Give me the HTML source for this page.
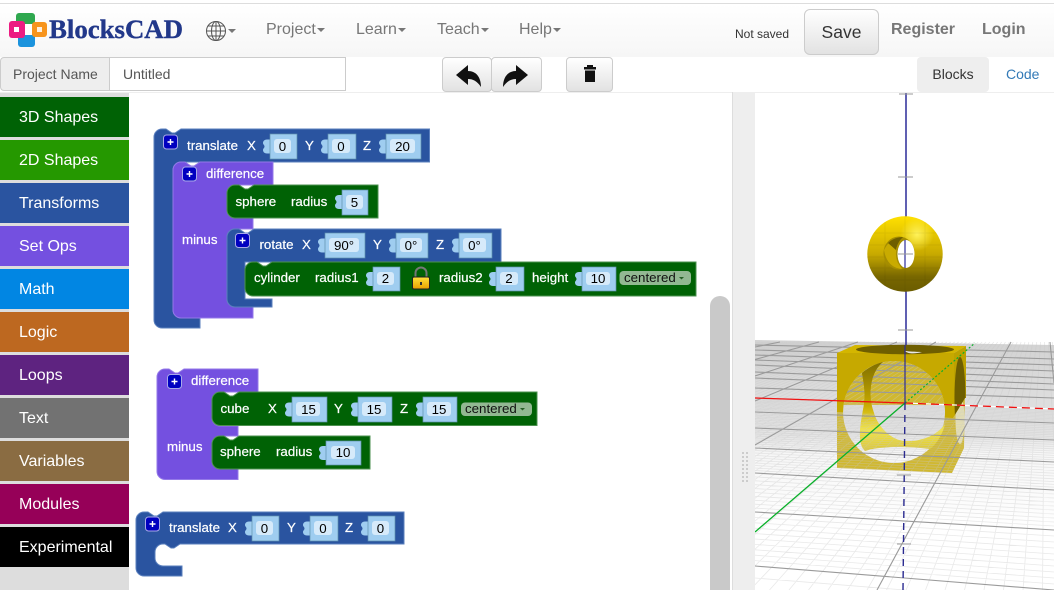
<!DOCTYPE html>
<html><head><meta charset="utf-8"><title>BlocksCAD</title>
<style>
html,body{margin:0;padding:0;background:#fff;width:1054px;height:590px;overflow:hidden}
#p{position:relative;width:1054px;height:590px;overflow:hidden;font-family:"Liberation Sans",sans-serif;background:#fff}
#p>div{position:absolute}
.nav{left:0;top:3px;width:1054px;height:53px;border-top:1px solid #ddd;border-bottom:1px solid #d4d4d4;background:linear-gradient(#fff,#f6f6f6)}
.t{position:absolute;white-space:nowrap}
.m{color:#777;font-size:16px;top:21px}
.c{display:inline-block;width:0;height:0;border-left:4px solid transparent;border-right:4px solid transparent;border-top:4px solid #777;vertical-align:middle;margin-left:1px}
.btn{background:linear-gradient(#fff,#e2e2e2);border:1px solid #ccc;border-radius:4px;box-sizing:border-box}
.sb{left:0;width:129px;height:40px;color:#fff;font-size:16px;line-height:42px;text-indent:19px}
svg{display:block}
svg text{font-family:"Liberation Sans",sans-serif}
.w{fill:#fff;font-size:13.3px;stroke:#fff;stroke-width:.2}
.f{fill:#9fcdf0;stroke:#5f90ad;stroke-width:.7}
.i{fill:#d6eafa}
.v{fill:#000;font-size:13.3px;text-anchor:middle}
.tb{fill:#9fcdf0}
.dd{fill:#92b892}
.dt{fill:#111;font-size:13.3px}
.pb{fill:#0000c0;stroke:#a8a8e8;stroke-width:1}
.pt{stroke:#fff;stroke-width:1.4}
</style></head><body><div id="p">

<div class="nav"></div>
<svg style="position:absolute;left:0;top:0" width="240" height="56">
<rect x="16" y="13" width="19" height="11" rx="3" fill="#2fa84f"/>
<rect x="21" y="20" width="9" height="16" fill="#2fa84f"/>
<rect x="18" y="33" width="17" height="14" rx="3" fill="#1b93dd"/>
<rect x="9" y="21" width="16" height="17" rx="3" fill="#ec1c82"/>
<rect x="32" y="22" width="15" height="15" rx="3" fill="#f7941d"/>
<rect x="25" y="24" width="7" height="11" fill="#fff"/>
<rect x="14" y="27" width="5" height="5" fill="#fff"/>
<rect x="37" y="27" width="5" height="5" fill="#fff" opacity=".85"/>
<text x="49" y="38" style="font-family:'Liberation Serif',serif;font-weight:bold;font-size:26.8px;stroke:#22388a;stroke-width:.4" fill="#22388a">BlocksCAD</text>
<g fill="none" stroke="#555" stroke-width="1">
<circle cx="216" cy="31" r="9.500"/><ellipse cx="216" cy="31" rx="4.500" ry="9.500"/>
<path d="M216,21.500V40.500M206.500,31H225.500M208,26H224M208,36H224"/></g>
<path d="M228,29h8l-4,4z" fill="#777"/>
</svg>
<div class="t m" style="left:266px">Project<span class="c"></span></div>
<div class="t m" style="left:356px">Learn<span class="c"></span></div>
<div class="t m" style="left:437px">Teach<span class="c"></span></div>
<div class="t m" style="left:519px">Help<span class="c"></span></div>
<div class="t" style="left:735px;top:27px;font-size:12px;color:#333">Not saved</div>
<div class="btn" style="left:804px;top:9px;width:75px;height:46px;border-radius:6px;text-align:center;font-size:17.5px;line-height:44px;color:#333">Save</div>
<div class="t" style="left:891px;top:21px;font-size:16px;font-weight:bold;color:#777">Register</div>
<div class="t" style="left:982px;top:21px;font-size:16px;font-weight:bold;color:#777">Login</div>

<div style="left:0;top:57px;width:1054px;height:36px;background:#fff;border-bottom:1px solid #eee;box-sizing:border-box"></div>
<div style="left:0;top:57px;width:110px;height:34px;background:#eee;border:1px solid #ccc;border-radius:4px 0 0 4px;box-sizing:border-box;color:#555;font-size:14px;line-height:32px;text-indent:12px">Project Name</div>
<div style="left:110px;top:57px;width:236px;height:34px;background:#fff;border:1px solid #ccc;border-left:none;box-sizing:border-box;color:#555;font-size:14px;line-height:32px;text-indent:13px">Untitled</div>
<div class="btn" style="left:442px;top:57px;width:50px;height:35px"></div>
<div class="btn" style="left:491px;top:57px;width:51px;height:35px"></div>
<div class="btn" style="left:566px;top:57px;width:47px;height:35px"></div>
<svg style="position:absolute;left:440px;top:57px" width="180" height="36">
<path d="M16,18 L28,8 V14 C36,14 41,20 41,30 C37,24 33,22 28,22 V28 Z" fill="#111"/>
<path d="M88,18 L76,8 V14 C68,14 63,20 63,30 C67,24 71,22 76,22 V28 Z" fill="#111"/>
<path d="M144,10h3v-2h6v2h3v2.500h-12z M145,13.500h10V25h-10z" fill="#111"/>
</svg>
<div style="left:917px;top:57px;width:72px;height:35px;background:#eee;border-radius:4px;text-align:center;font-size:14px;line-height:34px;color:#333">Blocks</div>
<div class="t" style="left:1006px;top:66px;font-size:14px;color:#337ab7">Code</div>

<div style="left:0;top:93px;width:129px;height:497px;background:#ddd"></div>
<div class="sb" style="top:97px;background:#006205">3D Shapes</div>
<div class="sb" style="top:140px;background:#259800">2D Shapes</div>
<div class="sb" style="top:183px;background:#2a54a0">Transforms</div>
<div class="sb" style="top:226px;background:#7450e0">Set Ops</div>
<div class="sb" style="top:269px;background:#0186e3">Math</div>
<div class="sb" style="top:312px;background:#bd6820">Logic</div>
<div class="sb" style="top:355px;background:#5e2380">Loops</div>
<div class="sb" style="top:398px;background:#727272">Text</div>
<div class="sb" style="top:441px;background:#8a6c42">Variables</div>
<div class="sb" style="top:484px;background:#960058">Modules</div>
<div class="sb" style="top:527px;background:#000">Experimental</div>

<div style="left:710px;top:296px;width:20px;height:294px;background:#c9c9c9;border-radius:10px 10px 0 0"></div>
<div style="left:732px;top:92px;width:23px;height:498px;background:#eee;border-left:1px solid #ddd;box-sizing:border-box"></div>
<svg style="position:absolute;left:740px;top:450px" width="10" height="36" fill="#ccc">
<path d="M2,2h2v2h-2zM6,2h2v2h-2zM2,6h2v2h-2zM6,6h2v2h-2zM2,10h2v2h-2zM6,10h2v2h-2zM2,14h2v2h-2zM6,14h2v2h-2zM2,18h2v2h-2zM6,18h2v2h-2zM2,22h2v2h-2zM6,22h2v2h-2zM2,26h2v2h-2zM6,26h2v2h-2zM2,30h2v2h-2zM6,30h2v2h-2z"/></svg>

<svg style="position:absolute;left:0;top:0" width="732" height="590">
<defs><path id="t" d="M7,-7H4C1,-7 0,-5 0,-3.500C0,-2 1.500,-1.500 1.500,0C1.500,1.500 0,2 0,3.500C0,5 1,7 4,7H7Z" class="tb"/></defs>

<path fill="#2a54a0" stroke="#5a7fbd" stroke-width="1" d="M154,137a8,8 0 0 1 8,-8h4l6,4h3l6,-4H429.500V162H181a8,8 0 0 0 -8,8V310a8,8 0 0 0 8,8H200V328H162a8,8 0 0 1 -8,-8Z"/>
<path fill="#7450e0" stroke="#9479e8" stroke-width="1" d="M173,170a8,8 0 0 1 8,-8h4l6,4h3l6,-4H273V185H235a8,8 0 0 0 -8,8V210a8,8 0 0 0 8,8H253V229H235a8,8 0 0 0 -8,8V299a8,8 0 0 0 8,8H253V318H181a8,8 0 0 1 -8,-8Z"/>
<path fill="#006205" stroke="#4d9150" stroke-width="1" d="M227,193a8,8 0 0 1 8,-8h4l6,4h3l6,-4H378V218H235a8,8 0 0 1 -8,-8Z"/>
<path fill="#2a54a0" stroke="#5a7fbd" stroke-width="1" d="M227,237a8,8 0 0 1 8,-8h4l6,4h3l6,-4H501V262H245V299H272V307H235a8,8 0 0 1 -8,-8Z"/>
<path fill="#006205" stroke="#4d9150" stroke-width="1" d="M245,270a8,8 0 0 1 8,-8h4l6,4h3l6,-4H696V296H253a8,8 0 0 1 -8,-8Z"/>

<path fill="#7450e0" stroke="#9479e8" stroke-width="1" d="M157,377a8,8 0 0 1 8,-8h4l6,4h3l6,-4H258V392H220a8,8 0 0 0 -8,8V418a8,8 0 0 0 8,8H238V436H220a8,8 0 0 0 -8,8V461a8,8 0 0 0 8,8H238V479.500H165a8,8 0 0 1 -8,-8Z"/>
<path fill="#006205" stroke="#4d9150" stroke-width="1" d="M212,400a8,8 0 0 1 8,-8h4l6,4h3l6,-4H537V425.500H220a8,8 0 0 1 -8,-8Z"/>
<path fill="#006205" stroke="#4d9150" stroke-width="1" d="M212,444a8,8 0 0 1 8,-8h4l6,4h3l6,-4H370V469H220a8,8 0 0 1 -8,-8Z"/>

<path fill="#2a54a0" stroke="#5a7fbd" stroke-width="1" d="M136,520a8,8 0 0 1 8,-8h4l6,4h3l6,-4H404V544H180l-6,4h-3l-6,-4h-2a8,8 0 0 0 -8,8V558a8,8 0 0 0 8,8H182V576H144a8,8 0 0 1 -8,-8Z"/>

<g><rect class="pb" x="163.500" y="135" width="14" height="14" rx="3"/><path class="pt" d="M167.500,142h6M170.500,139v6"/>
<rect class="pb" x="182.500" y="167" width="14" height="14" rx="3"/><path class="pt" d="M186.500,174h6M189.500,171v6"/>
<rect class="pb" x="235.500" y="233.500" width="14" height="14" rx="3"/><path class="pt" d="M239.500,240.500h6M242.500,237.500v6"/>
<rect class="pb" x="167.500" y="374.500" width="14" height="14" rx="3"/><path class="pt" d="M171.500,381.500h6M174.500,378.500v6"/>
<rect class="pb" x="145.500" y="517" width="14" height="14" rx="3"/><path class="pt" d="M149.500,524h6M152.500,521v6"/></g>

<text class="w" x="187" y="150">translate</text><text class="w" x="247" y="150">X</text><text class="w" x="305" y="150">Y</text><text class="w" x="363" y="150">Z</text>
<use href="#t" x="263" y="146.500"/><rect class="f" x="270" y="134" width="27" height="25"/><rect class="i" x="274" y="139" width="17" height="14" rx="3"/><text class="v" x="282.500" y="151">0</text>
<use href="#t" x="321" y="146.500"/><rect class="f" x="328" y="134" width="28" height="25"/><rect class="i" x="332" y="139" width="18" height="14" rx="3"/><text class="v" x="341" y="151">0</text>
<use href="#t" x="379" y="146.500"/><rect class="f" x="386" y="134" width="35" height="25"/><rect class="i" x="390" y="139" width="25" height="14" rx="3"/><text class="v" x="402.500" y="151">20</text>

<text class="w" x="206" y="178">difference</text>
<text class="w" x="182" y="244">minus</text>
<text class="w" x="235.500" y="206">sphere</text><text class="w" x="291" y="206">radius</text>
<use href="#t" x="335" y="202"/><rect class="f" x="342" y="190" width="26" height="25"/><rect class="i" x="346" y="195" width="17" height="14" rx="3"/><text class="v" x="354.500" y="207">5</text>

<text class="w" x="259.500" y="249">rotate</text><text class="w" x="302" y="249">X</text><text class="w" x="373" y="249">Y</text><text class="w" x="436" y="249">Z</text>
<use href="#t" x="318" y="245.500"/><rect class="f" x="325" y="233" width="40" height="25"/><rect class="i" x="329" y="238" width="30" height="14" rx="3"/><text class="v" x="344" y="250">90°</text>
<use href="#t" x="389" y="245.500"/><rect class="f" x="396" y="233" width="32" height="25"/><rect class="i" x="400" y="238" width="22" height="14" rx="3"/><text class="v" x="411" y="250">0°</text>
<use href="#t" x="452" y="245.500"/><rect class="f" x="459" y="233" width="33" height="25"/><rect class="i" x="463" y="238" width="23" height="14" rx="3"/><text class="v" x="474.500" y="250">0°</text>

<text class="w" x="254" y="282">cylinder</text><text class="w" x="315" y="282">radius1</text><text class="w" x="439" y="282">radius2</text><text class="w" x="532" y="282">height</text>
<use href="#t" x="366" y="279"/><rect class="f" x="373" y="267" width="27" height="24"/><rect class="i" x="377" y="272" width="17" height="13" rx="3"/><text class="v" x="385.500" y="283">2</text>
<use href="#t" x="489" y="279"/><rect class="f" x="496" y="267" width="28" height="24"/><rect class="i" x="500" y="272" width="18" height="13" rx="3"/><text class="v" x="509" y="283">2</text>
<use href="#t" x="575" y="279"/><rect class="f" x="582" y="267" width="34" height="24"/><rect class="i" x="586" y="272" width="24" height="13" rx="3"/><text class="v" x="598" y="283">10</text>
<rect class="dd" x="619.500" y="271" width="71.500" height="14" rx="4"/><text class="dt" x="624" y="282">centered</text><path d="M679,277h5l-2.500,2.500z" fill="#265f26"/>
<defs><linearGradient id="lk" x1="0" y1="0" x2="0" y2="1"><stop offset="0" stop-color="#ffe23a"/><stop offset="1" stop-color="#e8a000"/></linearGradient></defs>
<path d="M415.500,278V273a5.500,5.500 0 0 1 11,0V278" fill="none" stroke="#777" stroke-width="2"/>
<rect x="412.500" y="277" width="17" height="12" rx="1.500" fill="url(#lk)" stroke="#222" stroke-width="1"/><rect x="420" y="282" width="2" height="3" fill="#333"/>

<text class="w" x="191" y="385">difference</text><text class="w" x="167" y="451">minus</text>
<text class="w" x="220.500" y="413">cube</text><text class="w" x="268" y="413">X</text><text class="w" x="334" y="413">Y</text><text class="w" x="400" y="413">Z</text>
<use href="#t" x="285" y="409.500"/><rect class="f" x="292" y="397" width="35" height="25"/><rect class="i" x="296" y="402" width="24" height="14" rx="3"/><text class="v" x="308.500" y="414">15</text>
<use href="#t" x="351" y="409.500"/><rect class="f" x="358" y="397" width="34" height="25"/><rect class="i" x="362" y="402" width="24" height="14" rx="3"/><text class="v" x="374" y="414">15</text>
<use href="#t" x="416" y="409.500"/><rect class="f" x="423" y="397" width="34" height="25"/><rect class="i" x="427" y="402" width="24" height="14" rx="3"/><text class="v" x="439" y="414">15</text>
<rect class="dd" x="461" y="402.500" width="71" height="13.500" rx="4"/><text class="dt" x="465" y="413">centered</text><path d="M520,408h5l-2.500,2.500z" fill="#265f26"/>
<text class="w" x="220" y="456">sphere</text><text class="w" x="276" y="456">radius</text>
<use href="#t" x="319" y="453"/><rect class="f" x="326" y="441" width="35" height="24"/><rect class="i" x="331" y="446" width="24" height="13" rx="3"/><text class="v" x="343" y="457">10</text>

<text class="w" x="169" y="532">translate</text><text class="w" x="228" y="532">X</text><text class="w" x="287" y="532">Y</text><text class="w" x="345" y="532">Z</text>
<use href="#t" x="245" y="528.500"/><rect class="f" x="252" y="516" width="27" height="25"/><rect class="i" x="256" y="521" width="17" height="14" rx="3"/><text class="v" x="264.500" y="533">0</text>
<use href="#t" x="303" y="528.500"/><rect class="f" x="310" y="516" width="28" height="25"/><rect class="i" x="314" y="521" width="18" height="14" rx="3"/><text class="v" x="323" y="533">0</text>
<use href="#t" x="361" y="528.500"/><rect class="f" x="368" y="516" width="27" height="25"/><rect class="i" x="372" y="521" width="17" height="14" rx="3"/><text class="v" x="380.500" y="533">0</text>
</svg>

<svg style="position:absolute;left:755px;top:93px" width="299" height="497" viewBox="755 93 299 497">
<defs>
<linearGradient id="fl" x1="0" y1="340" x2="0" y2="530" gradientUnits="userSpaceOnUse"><stop offset="0" stop-color="#d2d2d2"/><stop offset=".5" stop-color="#e4e4e4"/><stop offset=".6" stop-color="#f6f6f6"/><stop offset="1" stop-color="#fff"/></linearGradient>
<linearGradient id="sp" x1="0" y1="0" x2="0" y2="1"><stop offset="0" stop-color="#ffe000"/><stop offset=".5" stop-color="#c8aa00"/><stop offset=".8" stop-color="#786700"/><stop offset="1" stop-color="#6b5c00"/></linearGradient>
<radialGradient id="hl" cx=".66" cy=".24" r=".22"><stop offset="0" stop-color="#fff25a"/><stop offset="1" stop-color="#fff25a" stop-opacity="0"/></radialGradient>
<linearGradient id="inn" x1="0" y1="362" x2="0" y2="452" gradientUnits="userSpaceOnUse"><stop offset="0" stop-color="#7f6e00"/><stop offset=".45" stop-color="#c2a500"/><stop offset=".75" stop-color="#f6e63a"/><stop offset="1" stop-color="#d9c53a"/></linearGradient>
<clipPath id="up"><path d="M830,300H975V398L965,398L953,418L837,412H830Z"/></clipPath>
</defs>

<path d="M755,340L1054,345V590H755Z" fill="url(#fl)"/>

<path d="M837,405L954,405L965,390L964,448L952,473L837,468Z M894,361a51,51 0 1 0 .1,0Z" fill="#d0b830" fill-rule="evenodd"/>
<ellipse cx="960" cy="420" rx="4.500" ry="24" fill="#e6e0b0"/>
<path d="M862,373C868,368 875,364 883,362C870,372 868,395 873,410C877,425 888,438 903,441C917,442 935,438 945,424C943,434 935,446 930,449C905,446 880,446 865,451C857,444 860,425 863,410C866,395 864,385 862,373Z" fill="url(#inn)"/>

<g id="gm" fill="none" stroke="#c8c8c8" stroke-opacity=".4" stroke-width=".8"></g>
<path fill="none" stroke="#9a9a9a" stroke-width="1.100" d="M755,566L1054,590M755,512L1054,530M755,473L1054,490M755,448L1054,462M755,428L1054,440M755,412L1054,423M755,388L1054,398M755,378L1054,390M755,372L1054,384M755,365L1054,378M755,360L1054,371M755,355L1054,365M755,350L1054,359M755,345L1054,352
M877,590L1011,342M1050,342L1054,383M936,342L755,445M897,342L755,401M858,342L755,376M819,342L755,359.500M780,342L755,347"/>

<g clip-path="url(#up)">
<path d="M837,353L954,353L954,440L837,440Z M894,361a51,51 0 1 0 .1,0Z" fill="#c6a900" fill-rule="evenodd"/>
<path d="M954,353L966,346V420L954,440Z" fill="#bda200"/>
<ellipse cx="960" cy="398" rx="5.500" ry="41" fill="#6e5e00"/>
<path d="M862,373C868,368 875,364 883,362C870,372 868,395 873,410C877,425 888,438 903,441C917,442 935,438 945,424C943,434 935,446 930,449C905,446 880,446 865,451C857,444 860,425 863,410C866,395 864,385 862,373Z" fill="url(#inn)"/>
</g>
<path d="M837,353L855,345L966,346L954,353Z" fill="#d4b600"/>
<ellipse cx="905" cy="349.500" rx="49" ry="4.700" fill="#6e5e00"/>
<path d="M905,351C915,352 925,352 922,352C915,354 908,354 905,351Z" fill="#e8e8e8"/>

<path d="M755,398L905,403" stroke="#f01010" stroke-width="1.300" fill="none"/>
<path d="M905,403L1054,409" stroke="#fff" stroke-width="1.300" fill="none"/>
<path d="M905,403L1054,409" stroke="#f01010" stroke-width="1.300" stroke-dasharray="8 5" fill="none"/>
<path d="M755,532L905,403" stroke="#0ab02a" stroke-width="1.300" fill="none"/>
<path d="M905,403L975,343" stroke="#0ab02a" stroke-width="1.200" stroke-dasharray="2 2" fill="none"/>

<path d="M906,93V345" stroke="#2c2c98" stroke-width="1.500" fill="none"/>
<path d="M905,345V403" stroke="#2c2c98" stroke-width="1.200" fill="none"/>
<path d="M905,403L903,590" stroke="#2a2a90" stroke-width="1.400" stroke-dasharray="7 5" fill="none"/>
<path d="M899,94H913M898,177H913M898,330H913M897,475H911M897,544H911" stroke="#999" stroke-width="1" fill="none"/>

<circle cx="905" cy="254" r="37.700" fill="url(#sp)"/>
<circle cx="905" cy="254" r="37.700" fill="url(#hl)"/>
<path d="M874,233L936,233M868,245H942M867,257H943M869,268H941M876,280H934M905,216V292M885,222V286M925,222V286" stroke="#000" stroke-opacity=".05" fill="none"/>
<ellipse cx="899" cy="253" rx="15.500" ry="16.500" fill="#a58d00"/>
<path d="M884,250C888,242 893,238 903,237C896,244 894,255 898,263L902,269C892,268 886,262 884,250Z" fill="#c9ab00"/>
<path d="M888,243C892,239 898,237 903,237C899,241 897,245 896,250Z" fill="#6e5e00"/>
<ellipse cx="906" cy="254" rx="8.500" ry="14" fill="#fff"/>
<path d="M905,240V268" stroke="#2c2c98" stroke-width="1.200"/>
<path d="M898,254H913" stroke="#999" stroke-width="1"/>
</svg>
<script>
(function(){var g=document.getElementById('gm'),d='',b,i,k;
for(b=-1200;b<1300;b+=19.5){var a=(b-1045)*.2+1045;d+='M'+b+',590L'+a.toFixed(1)+',342';}
var M=[[566,590],[512,530],[473,490],[448,462],[428,440],[412,423],[398,409]];
for(i=0;i<M.length-1;i++){for(k=1;k<10;k++){var t=k/10;
d+='M755,'+(M[i][0]+(M[i+1][0]-M[i][0])*t).toFixed(1)+'L1054,'+(M[i][1]+(M[i+1][1]-M[i][1])*t).toFixed(1);}}
d+='M755,578L905,590';
var p=document.createElementNS('http://www.w3.org/2000/svg','path');p.setAttribute('d',d);g.appendChild(p);
})();
</script>
</div></body></html>
